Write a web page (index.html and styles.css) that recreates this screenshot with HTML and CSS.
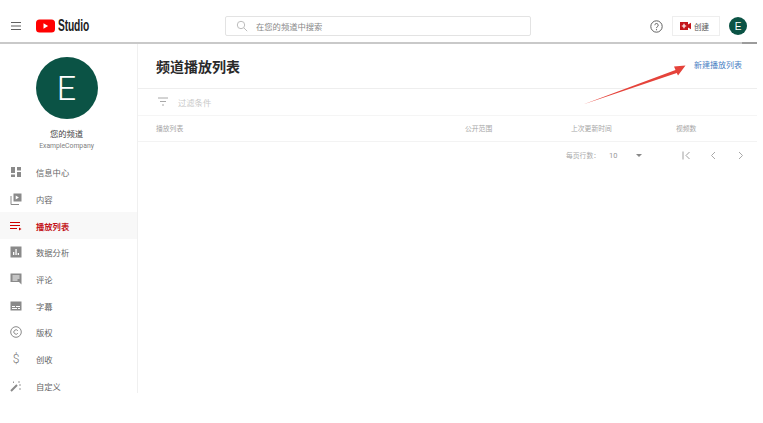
FILE: index.html
```html
<!DOCTYPE html>
<html lang="zh">
<head>
<meta charset="utf-8">
<title>频道播放列表</title>
<link rel="stylesheet" href="styles.css">
</head>
<body>
<div class="app">
  <header class="topbar">
    <div class="brand">
      <svg class="menu" width="12" height="10" viewBox="0 0 12 10"><path d="M1 1.500h10M1 5h10M1 8.500h10" stroke="#606060" stroke-width="1.200"/></svg>
      <svg class="yt" width="19" height="14" viewBox="0 0 19 14"><rect x="0" y="0.500" width="19" height="13" rx="3.500" fill="#f00"/><path d="M7.500 4.300v5.400l4.600-2.700z" fill="#fff"/></svg>
      <span class="studio">Studio</span>
    </div>
    <div class="search">
      <svg width="12" height="12" viewBox="0 0 12 12"><circle cx="5" cy="5" r="3.700" fill="none" stroke="#bdbdbd" stroke-width="1"/><path d="M7.800 7.800l3.400 3.400" stroke="#bdbdbd" stroke-width="1"/></svg>
      <span class="search-text">在您的频道中搜索</span>
    </div>
    <div class="actions">
      <svg class="help" width="13" height="13" viewBox="0 0 13 13"><circle cx="6.500" cy="6.500" r="5.700" fill="none" stroke="#606060" stroke-width="1"/><path d="M4.800 5.200a1.700 1.700 0 1 1 2.700 1.400c-.6.400-1 .7-1 1.500" fill="none" stroke="#606060" stroke-width="1"/><circle cx="6.500" cy="9.700" r=".6" fill="#606060"/></svg>
      <div class="create">
        <svg width="11" height="8" viewBox="0 0 11 8"><path d="M0 0h8v2.500L11 .8v6.400L8 5.500V8H0z" fill="#c4161c"/><path d="M4 1.800v4.400M1.800 4h4.400" stroke="#fff" stroke-width="1.200"/></svg>
        <span>创建</span>
      </div>
      <div class="avatar-small">E</div>
    </div>
  </header>
  <div class="body">
    <aside class="sidebar">
      <div class="channel">
        <div class="avatar-big">E</div>
        <div class="channel-name">您的频道</div>
        <div class="channel-sub">ExampleCompany</div>
      </div>
      <nav class="nav">
        <a class="nav-item"><svg width="12" height="12" viewBox="0 0 12 12"><path d="M1 1h4v6H1zM7 1h4v3.500H7zM1 8.500h4V11H1zM7 6h4v5H7z" fill="#8a8a8a"/></svg><span>信息中心</span></a>
        <a class="nav-item"><svg width="12" height="12" viewBox="0 0 12 12"><path d="M3.500 0.500h8v8h-8zM5.700 2.500v4l3.200-2z" fill="#8a8a8a" fill-rule="evenodd"/><path d="M1 3v8.500h8" fill="none" stroke="#8a8a8a"/></svg><span>内容</span></a>
        <a class="nav-item active"><svg width="12" height="12" viewBox="0 0 12 12"><path d="M0 2.500h10M0 5.500h10M0 8.500h7" stroke="#cc0000" stroke-width="1.100"/><path d="M9 7.500l2.500 1.500L9 10.500z" fill="#cc0000"/></svg><span>播放列表</span></a>
        <a class="nav-item"><svg width="12" height="12" viewBox="0 0 12 12"><path d="M.5 .5h11v11H.5zM3 6v3h1.300V6zM5.400 3v6h1.300V3zM7.700 7v2H9V7z" fill="#8a8a8a" fill-rule="evenodd"/></svg><span>数据分析</span></a>
        <a class="nav-item"><svg width="12" height="12" viewBox="0 0 12 12"><path d="M.5 .5h11v11l-2.500-2.500H.5zM2.500 2.500v1h7v-1zM2.500 4.500v1h7v-1zM2.500 6.500v1h5v-1z" fill="#8a8a8a" fill-rule="evenodd"/></svg><span>评论</span></a>
        <a class="nav-item"><svg width="12" height="12" viewBox="0 0 12 12"><path d="M.5 1.500h11v9H.5zM2 6v1h3V6zM6 6v1h4V6zM2 8v1h5V8zM8 8v1h2V8z" fill="#8a8a8a" fill-rule="evenodd"/></svg><span>字幕</span></a>
        <a class="nav-item"><svg width="12" height="12" viewBox="0 0 12 12"><circle cx="6" cy="6" r="5.300" fill="none" stroke="#8a8a8a"/><path d="M7.800 4.700a2.200 2.200 0 1 0 0 2.600" fill="none" stroke="#8a8a8a"/></svg><span>版权</span></a>
        <a class="nav-item"><span class="dollar">$</span><span>创收</span></a>
        <a class="nav-item"><svg width="12" height="12" viewBox="0 0 12 12"><path d="M1 11l6-6" stroke="#8a8a8a" stroke-width="2"/><path d="M9 1v2M11 5h-2M3.500 1.500v1.500M10 8v2" stroke="#9a9a9a" stroke-width="1"/></svg><span>自定义</span></a>
      </nav>
    </aside>
    <main class="content">
      <div class="title-row">
        <h1>频道播放列表</h1>
        <a class="new-link">新建播放列表</a>
      </div>
      <div class="filter-row">
        <svg width="12" height="9" viewBox="0 0 12 9"><path d="M1 1h10M3 4.500h6M5 8h2" stroke="#a8a8a8" stroke-width="1"/></svg>
        <span>过滤条件</span>
      </div>
      <div class="table-head">
        <span class="col-name">播放列表</span>
        <span class="col-vis">公开范围</span>
        <span class="col-time">上次更新时间</span>
        <span class="col-count">视频数</span>
      </div>
      <div class="pager">
        <span class="pager-label">每页行数：</span>
        <span class="pager-num">10</span>
        <svg class="pager-caret" width="6" height="3" viewBox="0 0 6 3"><path d="M0 0h6L3 3z" fill="#888"/></svg>
        <svg class="pager-first" width="9" height="9" viewBox="0 0 9 9"><path d="M1 .5v8M7.500 1L4 4.500 7.500 8" fill="none" stroke="#a0a0a0"/></svg>
        <svg class="pager-prev" width="9" height="9" viewBox="0 0 9 9"><path d="M6 1L2.500 4.500 6 8" fill="none" stroke="#a8a8a8"/></svg>
        <svg class="pager-next" width="9" height="9" viewBox="0 0 9 9"><path d="M3 1l3.500 3.500L3 8" fill="none" stroke="#a8a8a8"/></svg>
      </div>
    </main>
  </div>
  <svg class="arrow" width="110" height="50" viewBox="0 0 110 50"><path d="M1 46.500L93.500 12 92 8.500 103.500 7.500 96 17.500 94.800 15z" fill="#e5433b"/></svg>
</div>
</body>
</html>
```

FILE: styles.css
```css
* { box-sizing: border-box; }
html, body { margin: 0; padding: 0; background: #fff; }
body {
  font-family: "Noto Sans CJK SC", "Liberation Sans", sans-serif;
  color: #555;
  width: 763px;
  height: 423px;
  overflow: hidden;
}
.app {
  position: relative;
  width: 757px;
  height: 393px;
  overflow: hidden;
}
.topbar {
  position: relative;
  height: 44px;
  display: flex;
  align-items: center;
  border-bottom: 2px solid #c9c9c9;
  padding-top: 10px;
  background: #fff;
}
.topbar::after {
  content: "";
  position: absolute;
  right: 0;
  bottom: -2px;
  width: 15px;
  height: 2px;
  background: #9c9c9c;
}
.brand {
  width: 225px;
  display: flex;
  align-items: center;
  padding-left: 10px;
}
.yt { margin-left: 14px; }
.studio {
  margin-left: 3px;
  font-family: "Liberation Sans", sans-serif;
  font-weight: 700;
  font-size: 16px;
  letter-spacing: -.2px;
  color: #222;
  transform: scaleX(.64);
  transform-origin: left center;
}
.search {
  width: 306px;
  height: 20px;
  border: 1px solid #e3e3e3;
  border-radius: 2px;
  display: flex;
  align-items: center;
  padding-left: 10px;
  gap: 8px;
  font-size: 8.300px;
  color: #888;
}
.search-text { padding-bottom: 1px; }
.actions {
  flex: 1;
  display: flex;
  align-items: center;
  padding-left: 119px;
}
.create {
  width: 48px;
  height: 20px;
  margin-left: 9px;
  border: 1px solid #eee;
  display: flex;
  align-items: center;
  padding-left: 7px;
  gap: 3px;
  font-size: 7.500px;
  color: #555;
}
.avatar-small {
  width: 18px;
  height: 18px;
  margin-left: 9px;
  border-radius: 50%;
  background: #0b5345;
  color: #fff;
  font-size: 10px;
  font-family: "Liberation Sans", sans-serif;
  display: flex;
  align-items: center;
  justify-content: center;
}
.body {
  display: flex;
  height: 349px;
}
.sidebar {
  width: 138px;
  flex: none;
  border-right: 1px solid #f0f0f0;
}
.channel {
  display: flex;
  flex-direction: column;
  align-items: center;
  padding: 13px 4px 0 0;
  height: 115px;
}
.avatar-big {
  width: 62px;
  height: 62px;
  flex: none;
  border-radius: 50%;
  background: #0b5345;
  color: #fff;
  font-family: "Roboto", sans-serif;
  font-weight: 300;
  font-size: 34px;
  display: flex;
  align-items: center;
  justify-content: center;
}
.channel-name {
  margin-top: 8px;
  height: 13px;
  line-height: 13px;
  font-size: 8.300px;
  color: #444;
}
.channel-sub {
  margin-top: 1px;
  font-size: 6.800px;
  line-height: 10px;
  color: #808080;
  font-family: "Roboto", sans-serif;
}
.nav { display: flex; flex-direction: column; }
.nav-item {
  flex: none;
  height: 26.700px;
  display: flex;
  align-items: center;
  padding-left: 10px;
  gap: 14px;
  font-size: 8.300px;
  color: #666;
}
.nav-item svg { flex: none; }
.dollar {
  width: 12px;
  text-align: center;
  font-family: "Roboto", sans-serif;
  font-weight: 300;
  font-size: 12px;
  color: #777;
}
.nav-item.active {
  background: #f8f8f8;
  color: #c4161c;
  font-weight: 700;
}
.content { flex: 1; }
.title-row {
  height: 45px;
  display: flex;
  align-items: center;
  justify-content: space-between;
  padding: 0 15px 0 18px;
  border-bottom: 1px solid #eee;
}
h1 {
  margin: 0;
  font-size: 14px;
  font-weight: 700;
  color: #2a2a2a;
}
.new-link {
  font-size: 8px;
  color: #4a7fc4;
  position: relative;
  top: -2px;
}
.filter-row {
  height: 27px;
  display: flex;
  align-items: center;
  padding: 0 0 1px 19px;
  gap: 9px;
  font-size: 8.300px;
  color: #c8c8c8;
  border-bottom: 1px solid #f5f5f5;
}
.table-head {
  height: 26px;
  display: flex;
  align-items: center;
  padding-bottom: 2px;
  font-size: 6.800px;
  color: #a6a6a6;
  border-bottom: 1px solid #f3f3f3;
}
.col-name { margin-left: 18px; width: 309px; }
.col-vis { width: 106px; }
.col-time { width: 105px; }
.pager {
  height: 28px;
  display: flex;
  align-items: center;
  padding: 0 0 2px 428px;
  font-size: 6.800px;
  color: #aaa;
}
.pager-label { width: 43px; }
.pager-num { width: 27px; font-size: 7.500px; color: #999; font-family: "Roboto", sans-serif; }
.pager-first { margin-left: 40px; }
.pager-prev { margin-left: 18px; }
.pager-next { margin-left: 18px; }
.arrow {
  position: absolute;
  left: 582px;
  top: 58px;
}
```
